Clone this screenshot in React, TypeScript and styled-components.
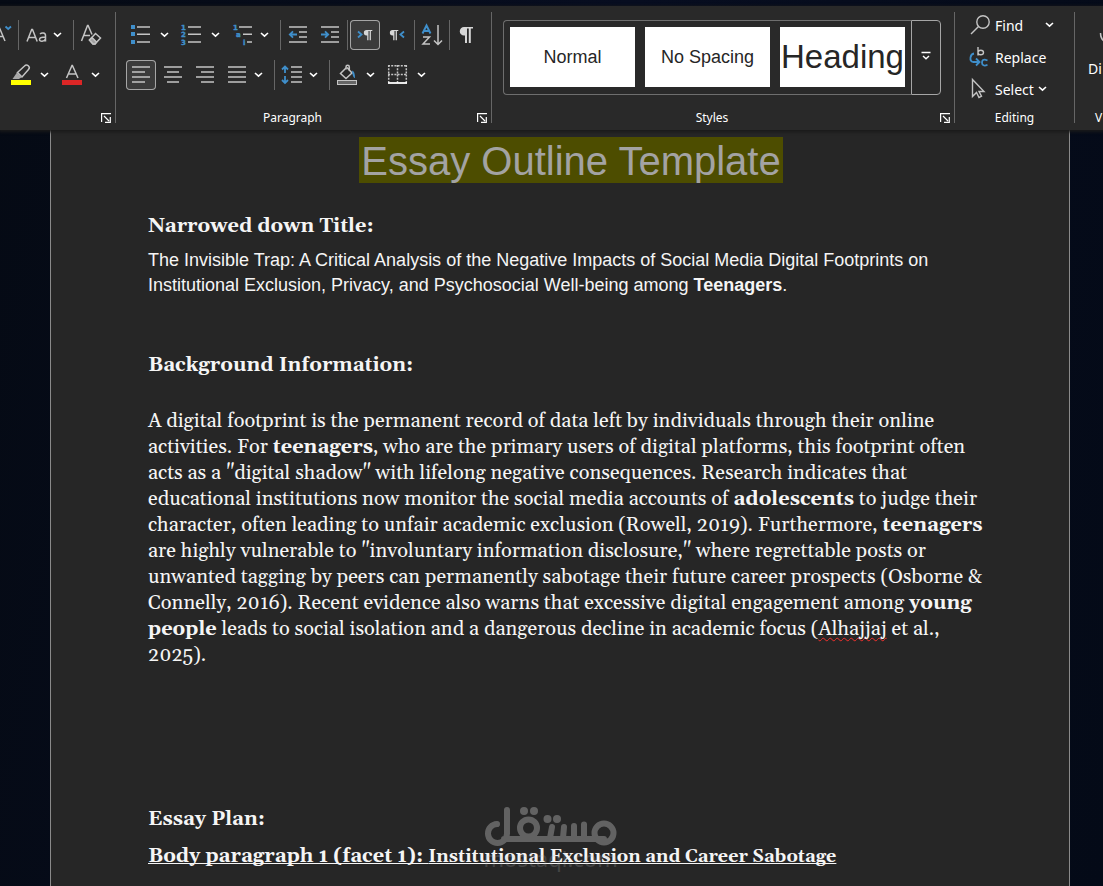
import React from "react";
import styled, { createGlobalStyle, css } from "styled-components";

const UI = `"Noto Sans", "Open Sans", sans-serif`;
const SERIF = `Gelasio, Georgia, "Liberation Serif", serif`;
const SANS = `"Liberation Sans", Arial, sans-serif`;
const BLUE = "#3f8fcb";
const GREY = "#c4c4c4";

const GlobalStyle = createGlobalStyle`
  *, *::before, *::after { box-sizing: border-box; }
  body { margin: 0; background: #040a17; overflow: hidden; }
  button { font: inherit; color: inherit; background: none; border: 0; padding: 0; margin: 0; }
`;

const Screen = styled.div`
  position: relative;
  display: flex;
  flex-direction: column;
  height: 100vh;
  padding-top: 6px;
  overflow: hidden;
  background: linear-gradient(100deg, #050a14, #070d20 50%, #040a17);
`;

const Ribbon = styled.header`
  display: flex;
  flex: none;
  background: #292929;
  color: #fff;
  font-family: ${UI};
  font-size: 12px;
  box-shadow: 0 1px 3px 1px #1a1a1a;
  z-index: 1;
`;

const Group = styled.section<{ $width?: number }>`
  display: flex;
  flex-direction: column;
  justify-content: space-between;
  height: 124px;
  overflow: hidden;
  ${(p) => (p.$width ? css`flex: 0 0 ${p.$width}px;` : css`flex: 1 1 0;`)}
`;

const Divider = styled.div`
  flex: none;
  width: 1px;
  margin: 6px 0 7px;
  background: #666;
`;

const Tools = styled.div`
  display: flex;
  flex-direction: column;
  gap: 10px;
  padding-top: 14px;
`;

const ToolRow = styled.div<{ $inset: number }>`
  display: flex;
  gap: 2px;
  padding-left: ${(p) => p.$inset}px;
`;

const Tool = styled.button<{ $active?: boolean; $width?: number }>`
  display: flex;
  flex: none;
  width: ${(p) => p.$width ?? 30}px;
  height: 30px;
  border-radius: 4px;
  ${(p) => p.$active && css`background: #3b3b3b; box-shadow: inset 0 0 0 1px #a6a6a6;`}
`;

const Combo = styled.div<{ $end?: boolean }>`
  display: flex;
  margin-right: ${(p) => (p.$end ? 8 : 3)}px;
`;

const CaretButton = styled.button<{ $narrow?: boolean }>`
  display: flex;
  align-items: center;
  justify-content: center;
  width: ${(p) => (p.$narrow ? 12 : 16)}px;
  height: 30px;
`;

const Rule = styled.div`
  width: 1px;
  height: 30px;
  background: #666;
`;

const GroupFooter = styled.div`
  display: flex;
  align-items: center;
  height: 24px;
  line-height: 24px;
`;

const GroupLabel = styled.span`
  flex: 1;
  text-align: center;
`;

const Launcher = styled.button`
  display: flex;
  justify-content: flex-end;
  width: 22px;
  padding-right: 4px;
`;

const GalleryFrame = styled.div`
  display: flex;
  margin: 14px 13px 0 11px;
`;

const Gallery = styled.div`
  display: flex;
  flex: 1;
  gap: 10px;
  padding: 6px;
  border: 1px solid #6e6e6e;
  border-right: 0;
  border-radius: 4px 0 0 4px;
`;

const StyleCard = styled.button<{ $large?: boolean }>`
  flex: 1 1 0;
  min-width: 0;
  height: 60px;
  overflow: hidden;
  background: #fff;
  color: #262626;
  font-family: ${SANS};
  font-size: ${(p) => (p.$large ? 33 : 18)}px;
  white-space: nowrap;
`;

const MoreButton = styled.button`
  display: flex;
  align-items: center;
  justify-content: center;
  width: 30px;
  height: 75px;
  padding-bottom: 4px;
  border: 1px solid #a6a6a6;
  border-radius: 0 4px 4px 0;
`;

const EditList = styled.div`
  display: flex;
  flex-direction: column;
  padding: 3px 0 0 12px;
`;

const EditButton = styled.button<{ $wide?: boolean }>`
  display: flex;
  align-items: center;
  gap: 4px;
  height: 32px;
  font-size: 14px;
  text-align: left;
  span { min-width: ${(p) => (p.$wide ? 46 : 0)}px; }
`;

const VoiceButton = styled.button`
  display: flex;
  flex-direction: column;
  align-items: flex-start;
  gap: 9px;
  padding: 24px 0 0 13px;
  font-size: 14px;
  line-height: 20px;
`;

const VoiceLabel = styled.span`
  padding-left: 20px;
`;

const Sheet = styled.main`
  flex: 1;
  margin: 0 33px 0 50px;
  padding: 7px 75px 0 97px;
  border: solid #8a8a8a;
  border-width: 0 1px;
  background: #262626;
  color: #f5f5f5;
  font-family: ${SERIF};
`;

const Title = styled.h1`
  display: flex;
  justify-content: center;
  margin: 0 0 28px;
  font: 400 40px/44px ${SANS};
  color: #a3a3a3;
  mark { padding: 2px 2px 0; background: #4d4d00; color: inherit; }
`;

const Heading = styled.h2<{ $gap: number }>`
  margin: 0 0 ${(p) => p.$gap}px;
  font-size: 20px;
  line-height: 30px;
  font-weight: 700;
`;

const Thesis = styled.p`
  margin: 0 0 52px;
  font: 400 18px/25px ${SANS};
`;

const Body = styled.p`
  margin: 0 0 136px;
  font-size: 20px;
  line-height: 26px;
  white-space: nowrap;
`;

const Misspelt = styled.span`
  text-decoration: underline wavy #f0302c 1px;
  text-underline-offset: 2px;
  text-decoration-skip-ink: none;
`;

const Facet = styled.h3`
  margin: 0;
  font-size: 20px;
  line-height: 30px;
  text-decoration: underline;
  text-decoration-thickness: 1px;
  text-decoration-skip-ink: none;
  white-space: nowrap;
  span { font-size: 18px; }
`;

const Watermark = styled.div`
  position: absolute;
  left: 50%;
  bottom: 18px;
  width: 134px;
  margin-left: -68px;
  opacity: 0.4;
  color: #bdbdbd;
  font: 400 22px/20px ${UI};
  text-align: center;
  pointer-events: none;
  z-index: 2;
  svg { display: block; }
`;

const Domain = styled.span`
  opacity: 0.5;
`;

const Caret = () => (
  <svg width="9" height="6" viewBox="0 0 9 6" fill="none" stroke="#fff" strokeWidth="1.6">
    <path d="M1 1l3.5 3.2L8 1" />
  </svg>
);

const Icon = ({ children, width = 30 }: { children: React.ReactNode; width?: number }) => (
  <svg width={width} height="30" viewBox={`0 0 ${width} 30`} fill="none" stroke={GREY} strokeWidth="1.5" aria-hidden="true">
    {children}
  </svg>
);

const Pilcrow = ({ x, y, s = 1 }: { x: number; y: number; s?: number }) => (
  <path
    transform={`translate(${x} ${y}) scale(${s})`}
    d="M8 0H4A4 4 0 0 0 4 8.500H5V16H7V1.500H8.800V16H10.800V1.500H13V0Z"
    fill="#d6d6d6"
    stroke="none"
  />
);

const Digit = ({ x, y, children }: { x: number; y: number; children: string }) => (
  <text x={x} y={y} fill={BLUE} stroke={BLUE} strokeWidth="0.4" fontFamily="DejaVu Sans, sans-serif" fontWeight="700" fontSize="7">
    {children}
  </text>
);

const LauncherIcon = () => (
  <svg width="10" height="10" viewBox="0 0 10 10" fill="none" stroke="#fff" strokeWidth="1.2">
    <path d="M.6 9V.6H10M3 3l5 5M9.300 4v5.300H4" />
  </svg>
);

const Footer = ({ label, launcher }: { label?: string; launcher?: string }) => (
  <GroupFooter>
    <GroupLabel>{label}</GroupLabel>
    {launcher && (
      <Launcher aria-label={launcher}>
        <LauncherIcon />
      </Launcher>
    )}
  </GroupFooter>
);

interface SplitProps {
  label: string;
  narrow?: boolean;
  end?: boolean;
  children: React.ReactNode;
}

const Split = ({ label, narrow, end, children }: SplitProps) => (
  <Combo $end={end}>
    <Tool aria-label={label}>
      <Icon>{children}</Icon>
    </Tool>
    <CaretButton $narrow={narrow} aria-label={`${label} options`}>
      <Caret />
    </CaretButton>
  </Combo>
);

const FontGroup = () => (
  <Group $width={115}>
    <Tools>
      <ToolRow $inset={0}>
        <Tool $width={16} aria-label="Shrink font">
          <Icon width={16}>
            <path d="M-6 21L-.5 8L5 21M-4 16.500H3" />
            <path d="M5.500 6.500l2.700 2.500L11 6.500" stroke={BLUE} strokeWidth="1.8" />
          </Icon>
        </Tool>
        <Rule />
        <Split label="Change case" narrow end>
          <path d="M6 21.500L10.700 9.500h.8L16.200 21.500M7.500 17.500h7.200" />
          <path d="M19 14c1.500-1.300 5.500-1.600 5.500 1.600v6M24.500 17c-3 0-6 .3-6 2.500 0 2.600 5 2.300 6-.8" />
        </Split>
        <Rule />
        <Tool aria-label="Clear formatting">
          <Icon>
            <path d="M5.500 21L11.500 5.500h.6L16 14.500M8 15.500h6" />
            <path d="M19.500 13.500l5 4.500-5.500 6h-2l-3.500-4z" />
            <path d="M16 17.500l4.500 4.500-1.500 2h-2l-3.500-4z" fill="#a0a0a0" />
          </Icon>
        </Tool>
      </ToolRow>
      <ToolRow $inset={6}>
        <Split label="Text highlight">
          <rect x="5" y="20" width="20" height="5" fill="#ff0" stroke="none" />
          <path d="M11.500 12.500L18.500 6a2.600 2.600 0 0 1 4 3.600l-6.500 7.400z" />
          <path d="M11 12.500l5 4.500-3 2H6.500z" fill="#a8a8a8" stroke="none" />
        </Split>
        <Split label="Font color">
          <rect x="5" y="20" width="20" height="5" fill="#dc2626" stroke="none" />
          <path d="M9.500 18L15 5.500h.4L21 18M11.500 14h7.500" />
        </Split>
      </ToolRow>
    </Tools>
    <Footer launcher="Font settings" />
  </Group>
);

const ParagraphGroup = () => (
  <Group $width={375}>
    <Tools>
      <ToolRow $inset={10}>
        <Split label="Bullets">
          <path d="M5 5h4v4H5zM5 12h4v4H5zM5 20h4v4H5z" fill={BLUE} stroke="none" />
          <path d="M11 7h13M11 14.300h13M11 22h13" />
        </Split>
        <Split label="Numbering">
          <Digit x={4} y={10}>1</Digit>
          <Digit x={4} y={17}>2</Digit>
          <Digit x={4} y={25}>3</Digit>
          <path d="M11 7h13M11 14.300h13M11 22h13" />
        </Split>
        <Split label="Multilevel list" narrow end>
          <Digit x={5} y={10}>1</Digit>
          <Digit x={8} y={17}>a</Digit>
          <Digit x={15} y={25}>i</Digit>
          <path d="M11 7h13M15 14.300h9M19 22h5" />
        </Split>
        <Rule />
        <Tool aria-label="Decrease indent">
          <Icon>
            <path d="M6 7h18M16 12h8M16 17h8M6 22h18" />
            <path d="M14 14.500H7M10 11.300l-3.200 3.200L10 17.700" stroke={BLUE} strokeWidth="1.800" />
          </Icon>
        </Tool>
        <Tool aria-label="Increase indent">
          <Icon>
            <path d="M6 7h18M16 12h8M16 17h8M6 22h18" />
            <path d="M6 14.500h7M10 11.300l3.200 3.200L10 17.700" stroke={BLUE} strokeWidth="1.800" />
          </Icon>
        </Tool>
        <Rule />
        <Tool $active aria-label="Left to right">
          <Icon>
            <path d="M8 11.500l3.500 3L8 17.500" stroke={BLUE} strokeWidth="1.8" />
            <Pilcrow x={14} y={10} s={0.64} />
          </Icon>
        </Tool>
        <Tool aria-label="Right to left">
          <Icon>
            <Pilcrow x={8} y={10} s={0.64} />
            <path d="M22 11.500l-3.500 3 3.500 3" stroke={BLUE} strokeWidth="1.8" />
          </Icon>
        </Tool>
        <Rule />
        <Tool aria-label="Sort">
          <Icon>
            <path d="M5.500 13.500L9.500 5.500 13.500 13.500M7 11h5" stroke={BLUE} strokeWidth="2" />
            <path d="M6 17h6.500L6 24h7" />
            <path d="M21 5v19M17 20.500l4 4 4-4" />
          </Icon>
        </Tool>
        <Rule />
        <Tool aria-label="Show marks">
          <Icon>
            <Pilcrow x={8} y={7} />
          </Icon>
        </Tool>
      </ToolRow>
      <ToolRow $inset={10}>
        <Tool $active aria-label="Align left">
          <Icon><path d="M6 7h18M6 12h13M6 17h18M6 22h13" /></Icon>
        </Tool>
        <Tool aria-label="Center">
          <Icon><path d="M6 7h18M9 12h12M6 17h18M9 22h12" /></Icon>
        </Tool>
        <Tool aria-label="Align right">
          <Icon><path d="M6 7h18M11 12h13M6 17h18M11 22h13" /></Icon>
        </Tool>
        <Split label="Justify" narrow end>
          <path d="M6 7h18M6 12h18M6 17h18M6 22h18" />
        </Split>
        <Rule />
        <Split label="Line spacing" narrow end>
          <path d="M8 13V6.500M5 9.500L8 6.500l3 3M8 16v7M5 20l3 3 3-3" stroke={BLUE} strokeWidth="1.8" />
          <path d="M14 7h11M14 12h11M14 17h11M14 22h11" />
        </Split>
        <Rule />
        <Split label="Shading">
          <rect x="5.500" y="20.500" width="19" height="4" fill="#666" strokeWidth="1" />
          <path d="M14 8L8.500 13.500l5.500 5 6-5.500-5-5.500M14 9.500V7c0-2.300 3.300-2.300 3.300 0v4" />
          <path d="M20 10.500c2 .5 3 3 3 7.500-1.500 0-2-2-2.500-4z" fill={BLUE} stroke="none" />
        </Split>
        <Split label="Borders">
          <path d="M5 5.700h19M5 14.500h19M5.700 5v18M14.500 5v18M23.300 5v18" strokeDasharray="2 1.200" />
          <path d="M5 23h19" stroke="#fff" strokeWidth="1.800" />
        </Split>
      </ToolRow>
    </Tools>
    <Footer label="Paragraph" launcher="Paragraph settings" />
  </Group>
);

const StylesGroup = () => (
  <Group>
    <GalleryFrame>
      <Gallery>
        <StyleCard>Normal</StyleCard>
        <StyleCard>No Spacing</StyleCard>
        <StyleCard $large>Heading</StyleCard>
      </Gallery>
      <MoreButton aria-label="More styles">
        <svg width="10" height="10" viewBox="0 0 10 10" fill="none" stroke="#fff" strokeWidth="1.400">
          <path d="M.5 1.500h9M2 5l3 2.800L8 5" />
        </svg>
      </MoreButton>
    </GalleryFrame>
    <Footer label="Styles" launcher="Style settings" />
  </Group>
);

const EditIcon = ({ children }: { children: React.ReactNode }) => (
  <svg width="24" height="24" viewBox="0 0 24 24" fill="none" stroke={GREY} strokeWidth="1.400">
    {children}
  </svg>
);

const EditingGroup = () => (
  <Group $width={119}>
    <EditList>
      <EditButton $wide>
        <EditIcon>
          <circle cx="16" cy="9" r="6.200" />
          <path d="M11.500 13.500L4 21" />
        </EditIcon>
        <span>Find</span>
        <Caret />
      </EditButton>
      <EditButton>
        <EditIcon>
          <path d="M11 2v8.500M11 7.500c0-3 5.500-3 5.500 0s-5.500 3-5.500 0" />
          <path d="M7 8.500c-4 .5-5 7.500-1 8.500h6M9 13.500l3.500 3.500L9 20.500M20.500 15.500c-4.500-2-5.500 0-5.500 2.300s2 3.700 5.500 2" stroke={BLUE} strokeWidth="1.800" />
        </EditIcon>
        <span>Replace</span>
      </EditButton>
      <EditButton>
        <EditIcon>
          <path d="M5.500 2.500v17l4-4 2.500 5 2.500-1.200L12 14.500h5z" />
        </EditIcon>
        <span>Select</span>
        <Caret />
      </EditButton>
    </EditList>
    <Footer label="Editing" />
  </Group>
);

const VoiceGroup = () => (
  <Group $width={28}>
    <VoiceButton aria-label="Dictate">
      <svg width="15" height="20" viewBox="0 0 15 20" fill="none" stroke={GREY} strokeWidth="1.500">
        <path d="M12.500 3c0 4 1 7 5 9" />
      </svg>
      <span>Di</span>
    </VoiceButton>
    <GroupFooter>
      <VoiceLabel>V</VoiceLabel>
    </GroupFooter>
  </Group>
);

export default function App() {
  return (
    <Screen>
      <GlobalStyle />
      <Ribbon>
        <FontGroup />
        <Divider />
        <ParagraphGroup />
        <Divider />
        <StylesGroup />
        <Divider />
        <EditingGroup />
        <Divider />
        <VoiceGroup />
      </Ribbon>
      <Sheet>
        <Title><mark>Essay Outline Template</mark></Title>
        <Heading $gap={7}>Narrowed down Title:</Heading>
        <Thesis>
          The Invisible Trap: A Critical Analysis of the Negative Impacts of Social Media Digital Footprints on
          <br />
          Institutional Exclusion, Privacy, and Psychosocial Well-being among <b>Teenagers</b>.
        </Thesis>
        <Heading $gap={28}>Background Information:</Heading>
        <Body>
          A digital footprint is the permanent record of data left by individuals through their online<br />
          activities. For <b>teenagers</b>, who are the primary users of digital platforms, this footprint often<br />
          acts as a "digital shadow" with lifelong negative consequences. Research indicates that<br />
          educational institutions now monitor the social media accounts of <b>adolescents</b> to judge their<br />
          character, often leading to unfair academic exclusion (Rowell, 2019). Furthermore, <b>teenagers</b><br />
          are highly vulnerable to "involuntary information disclosure," where regrettable posts or<br />
          unwanted tagging by peers can permanently sabotage their future career prospects (Osborne &amp;<br />
          Connelly, 2016). Recent evidence also warns that excessive digital engagement among <b>young</b><br />
          <b>people</b> leads to social isolation and a dangerous decline in academic focus (<Misspelt>Alhajjaj</Misspelt> et al.,<br />
          2025).
        </Body>
        <Heading $gap={7}>Essay Plan:</Heading>
        <Facet>Body paragraph 1 (facet 1): <span>Institutional Exclusion and Career Sabotage</span></Facet>
      </Sheet>
      <Watermark>
        <svg width="134" height="42" viewBox="0 0 134 42" fill="none" stroke="currentColor" strokeWidth="6" strokeLinecap="round">
          <path d="M13 18a9.500 9.500 0 1 0 10 9.500V4M20 33H120" />
          <circle cx="44.500" cy="22" r="8.500" />
          <circle cx="120" cy="27" r="9.500" />
          <path d="M68 21l-2 11M80 21l-1 11M90 20v12M100 18.500V32" />
          <g fill="currentColor" stroke="none">
            <circle cx="40" cy="5" r="4" /><circle cx="50" cy="5" r="4" />
            <circle cx="63.500" cy="13" r="4" /><circle cx="73" cy="13" r="4" />
          </g>
        </svg>
        <Domain>mostaql.com</Domain>
      </Watermark>
    </Screen>
  );
}
